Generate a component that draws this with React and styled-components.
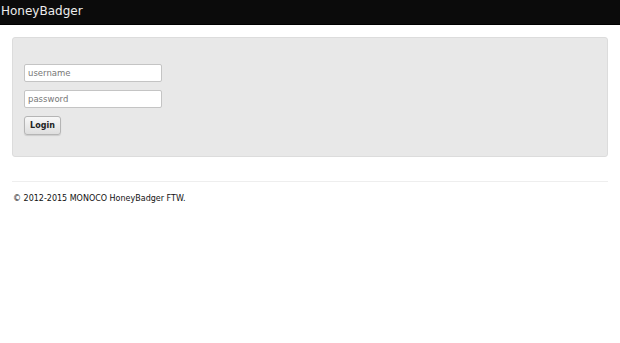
import React from "react";
import styled, { createGlobalStyle } from "styled-components";

const Global = createGlobalStyle`
  html, body { margin: 0; padding: 0; background: #fff; }
  body { font-family: "DejaVu Sans", Verdana, sans-serif; color: #333; }
`;

const NavBar = styled.div`
  height: 25px;
  background: #0b0b0b;
  border-bottom: 1px solid #000;
  box-sizing: border-box;
  display: flex;
  align-items: center;
  padding-left: 1px;
`;

const Brand = styled.span`
  color: #ededed;
  font-size: 12px;
  font-weight: normal;
  margin-top: -2px;
`;

const Container = styled.div`
  padding: 12px 12px 0 12px;
`;

const Well = styled.div`
  height: 120px;
  box-sizing: border-box;
  background: #e8e8e8;
  border: 1px solid #dcdcdc;
  border-radius: 3px;
  padding: 26px 11px 0 11px;
  display: flex;
  flex-direction: column;
  align-items: flex-start;
  gap: 8px;
`;

const Input = styled.input`
  width: 138px;
  height: 18px;
  box-sizing: border-box;
  border: 1px solid #c4c4c4;
  border-radius: 2px;
  background: #fff;
  font-family: "DejaVu Sans", Verdana, sans-serif;
  font-size: 8.5px;
  padding: 0 3px;
  color: #555;
  outline: none;
  &::placeholder { color: #777; }
`;

const Button = styled.button`
  width: 37px;
  height: 19px;
  box-sizing: border-box;
  border: 1px solid #b5b5b5;
  border-radius: 3px;
  background: linear-gradient(#f8f8f8, #dedede);
  font-family: "DejaVu Sans", Verdana, sans-serif;
  font-size: 8px;
  font-weight: 600;
  color: #222;
  padding: 0;
  box-shadow: 0 1px 1px rgba(0,0,0,0.12);
`;

const Rule = styled.hr`
  margin: 24px 0 0 0;
  border: 0;
  border-top: 1px solid #eee;
`;

const Footer = styled.p`
  margin: 12px 0 0 1px;
  font-size: 8px;
  color: #111;
  font-weight: normal;
`;

export default function App() {
  return (
    <>
      <Global />
      <NavBar>
        <Brand>HoneyBadger</Brand>
      </NavBar>
      <Container>
        <Well>
          <Input placeholder="username" />
          <Input type="password" placeholder="password" />
          <Button>Login</Button>
        </Well>
        <Rule />
        <Footer>© 2012-2015 MONOCO HoneyBadger FTW.</Footer>
      </Container>
    </>
  );
}
